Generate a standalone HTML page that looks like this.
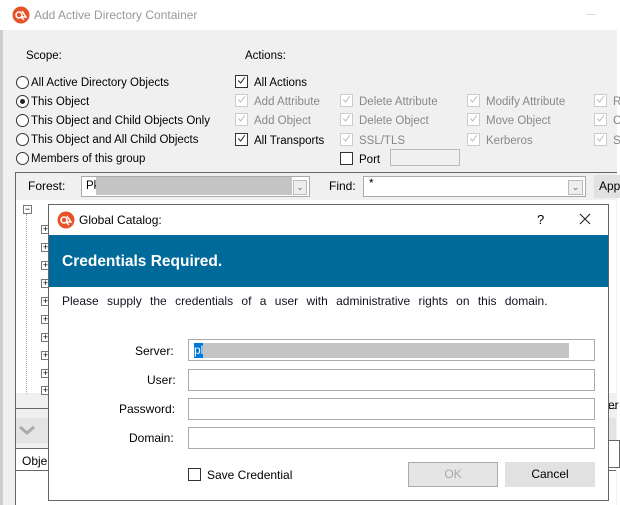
<!DOCTYPE html>
<html><head><meta charset="utf-8"><style>
*{box-sizing:border-box;margin:0;padding:0}
body{width:620px;height:505px;position:relative;overflow:hidden;background:#fff;font-family:"Liberation Sans",sans-serif;font-size:11.5px;color:#000}
.a{position:absolute;white-space:nowrap}
.cb{position:absolute;width:13px;height:13px;border:1px solid #333;background:#fff}
.cb.d{border-color:#ccc}
.ck{position:absolute;left:1px;top:0px;width:9px;height:9px}
.rd{position:absolute;width:13px;height:13px;border:1px solid #333;border-radius:50%;background:#fff}
.g{color:#888}
.t{margin-top:2px}
.in{position:absolute;background:#fff;border:1px solid #aaa;height:22px}
.pl{position:absolute;width:9px;height:9px;border:1px solid #777;background:#fff;font-size:9px;line-height:7px;text-align:center}
</style></head><body>
<div class="a" style="left:0;top:0;width:620px;height:30px;background:#fff"></div>
<svg class="a" style="left:12px;top:6px" width="18" height="18" viewBox="0 0 18 18"><circle cx="9" cy="9" r="8.5" fill="#e8522a"/><circle cx="7" cy="9" r="3" fill="none" stroke="#fff" stroke-width="1.5"/><path d="M9 11l3 3M10 5l4 6h-5" fill="none" stroke="#fff" stroke-width="1.4"/></svg>
<div class="a" style="left:34px;top:8px;color:#999;font-size:12px">Add Active Directory Container</div>
<div class="a" style="left:586px;top:14px;width:10px;height:1px;background:#ddd"></div>
<div class="a" style="left:0;top:30px;width:617px;height:475px;background:#f0f0f0;border-left:3px solid #ccc"></div>

<div class="a t" style="left:26px;top:48px">Scope:</div>
<div class="a t" style="left:245px;top:48px">Actions:</div>

<div class="rd" style="left:16px;top:76px"></div><div class="a t" style="left:31px;top:75px">All Active Directory Objects</div>
<div class="rd" style="left:16px;top:95px"><div style="position:absolute;left:3px;top:3px;width:5px;height:5px;border-radius:50%;background:#222"></div></div><div class="a t" style="left:31px;top:94px">This Object</div>
<div class="rd" style="left:16px;top:114px"></div><div class="a t" style="left:31px;top:113px">This Object and Child Objects Only</div>
<div class="rd" style="left:16px;top:133px"></div><div class="a t" style="left:31px;top:132px">This Object and All Child Objects</div>
<div class="rd" style="left:16px;top:152px"></div><div class="a t" style="left:31px;top:151px">Members of this group</div>

<svg width="0" height="0" style="position:absolute"><defs><path id="ck" d="M1.5 5l3 3 5-7" fill="none" stroke-width="1.2"/></defs></svg>
<div class="cb" style="left:235px;top:75px"><svg class="ck" viewBox="0 0 11 10"><use href="#ck" stroke="#222"/></svg></div><div class="a t" style="left:254px;top:75px">All Actions</div>
<div class="cb d" style="left:235px;top:94px"><svg class="ck" viewBox="0 0 11 10"><use href="#ck" stroke="#bbb"/></svg></div><div class="a g t" style="left:254px;top:94px">Add Attribute</div>
<div class="cb d" style="left:235px;top:113px"><svg class="ck" viewBox="0 0 11 10"><use href="#ck" stroke="#bbb"/></svg></div><div class="a g t" style="left:254px;top:113px">Add Object</div>
<div class="cb" style="left:235px;top:133px"><svg class="ck" viewBox="0 0 11 10"><use href="#ck" stroke="#222"/></svg></div><div class="a t" style="left:254px;top:133px">All Transports</div>

<div class="cb d" style="left:340px;top:94px"><svg class="ck" viewBox="0 0 11 10"><use href="#ck" stroke="#bbb"/></svg></div><div class="a g t" style="left:359px;top:94px">Delete Attribute</div>
<div class="cb d" style="left:340px;top:113px"><svg class="ck" viewBox="0 0 11 10"><use href="#ck" stroke="#bbb"/></svg></div><div class="a g t" style="left:359px;top:113px">Delete Object</div>
<div class="cb d" style="left:340px;top:133px"><svg class="ck" viewBox="0 0 11 10"><use href="#ck" stroke="#bbb"/></svg></div><div class="a g t" style="left:359px;top:133px">SSL/TLS</div>
<div class="cb" style="left:340px;top:152px"></div><div class="a t" style="left:359px;top:152px">Port</div>
<div class="a" style="left:390px;top:149px;width:70px;height:17px;border:1px solid #bbb;background:#f0f0f0"></div>

<div class="cb d" style="left:467px;top:94px"><svg class="ck" viewBox="0 0 11 10"><use href="#ck" stroke="#bbb"/></svg></div><div class="a g t" style="left:486px;top:94px">Modify Attribute</div>
<div class="cb d" style="left:467px;top:113px"><svg class="ck" viewBox="0 0 11 10"><use href="#ck" stroke="#bbb"/></svg></div><div class="a g t" style="left:486px;top:113px">Move Object</div>
<div class="cb d" style="left:467px;top:133px"><svg class="ck" viewBox="0 0 11 10"><use href="#ck" stroke="#bbb"/></svg></div><div class="a g t" style="left:486px;top:133px">Kerberos</div>
<div class="cb d" style="left:594px;top:94px"><svg class="ck" viewBox="0 0 11 10"><use href="#ck" stroke="#bbb"/></svg></div><div class="a g t" style="left:613px;top:94px">R</div>
<div class="cb d" style="left:594px;top:113px"><svg class="ck" viewBox="0 0 11 10"><use href="#ck" stroke="#bbb"/></svg></div><div class="a g t" style="left:613px;top:113px">C</div>
<div class="cb d" style="left:594px;top:133px"><svg class="ck" viewBox="0 0 11 10"><use href="#ck" stroke="#bbb"/></svg></div><div class="a g t" style="left:613px;top:133px">S</div>

<div class="a" style="left:15px;top:172px;width:602px;height:333px;border-left:1px solid #666;border-top:1px solid #666"></div>
<div class="a" style="left:28px;top:179px;font-size:12px">Forest:</div>
<div class="a" style="left:81px;top:176px;width:229px;height:21px;background:#fff;border:1px solid #aaa"></div>
<div class="a" style="left:86px;top:180px">Pk</div>
<div class="a" style="left:96px;top:177px;width:196px;height:18px;background:#c4c4c4"></div>
<div class="a" style="left:293px;top:180px;width:14px;height:15px;border:1px solid #bbb;background:#eee;font-size:9px;color:#666;text-align:center;line-height:13px">&#8964;</div>
<div class="a" style="left:329px;top:179px;font-size:12px">Find:</div>
<div class="a" style="left:363px;top:176px;width:223px;height:21px;background:#fff;border:1px solid #aaa"></div>
<div class="a" style="left:369px;top:178px">*</div>
<div class="a" style="left:568px;top:180px;width:15px;height:15px;border:1px solid #bbb;background:#eee;font-size:9px;color:#666;text-align:center;line-height:13px">&#8964;</div>
<div class="a" style="left:594px;top:175px;width:26px;height:23px;background:#e1e1e1"></div>
<div class="a" style="left:599px;top:179px;font-size:12px">App</div>

<div class="a" style="left:16px;top:200px;width:600px;height:193px;background:#fff"></div>
<div class="a" style="left:16px;top:393px;width:600px;height:16px;background:#f0f0f0;border-bottom:1px solid #666"></div>
<div class="pl" style="left:23px;top:205px;line-height:6px">&#8722;</div>
<div class="a" style="left:26px;top:214px;height:180px;border-left:1px dotted #aaa"></div>
<div class="pl" style="left:41px;top:225px">+</div><div class="pl" style="left:41px;top:243px">+</div><div class="pl" style="left:41px;top:261px">+</div><div class="pl" style="left:41px;top:279px">+</div><div class="pl" style="left:41px;top:297px">+</div><div class="pl" style="left:41px;top:315px">+</div><div class="pl" style="left:41px;top:333px">+</div><div class="pl" style="left:41px;top:351px">+</div><div class="pl" style="left:41px;top:369px">+</div><div class="pl" style="left:41px;top:386px">+</div>
<div class="a" style="left:16px;top:418px;width:600px;height:25px;background:#e4e4e4"></div>
<svg class="a" style="left:18px;top:424px" width="18" height="12"><path d="M2 3l7 6 7-6" fill="none" stroke="#aaa" stroke-width="3"/></svg>
<div class="a" style="left:16px;top:448px;width:600px;height:57px;background:#fff;border-top:1px solid #666"></div>
<div class="a" style="left:16px;top:448px;width:600px;height:23px;border-bottom:1px solid #666"></div>
<div class="a" style="left:22px;top:454px;font-size:12px">Obje</div>
<div class="a" style="left:608px;top:398px;font-size:12px">er</div>
<div class="a" style="left:608px;top:440px;width:12px;height:28px;border:1px solid #666;background:#fff"></div>

<div class="a" style="left:48px;top:204px;width:561px;height:297px;background:#fff;border:1px solid #666"></div>
<svg class="a" style="left:57px;top:211px" width="18" height="18" viewBox="0 0 18 18"><circle cx="9" cy="9" r="8.5" fill="#e8522a"/><circle cx="7" cy="9" r="3" fill="none" stroke="#fff" stroke-width="1.5"/><path d="M9 11l3 3M10 5l4 6h-5" fill="none" stroke="#fff" stroke-width="1.4"/></svg>
<div class="a" style="left:79px;top:213px;font-size:12px">Global Catalog:</div>
<div class="a" style="left:537px;top:212px;font-size:13px">?</div>
<svg class="a" style="left:579px;top:213px" width="12" height="12"><path d="M1 1l10 10M11 1L1 11" stroke="#222" stroke-width="1.1"/></svg>
<div class="a" style="left:49px;top:235px;width:559px;height:52px;background:#006a9b"></div>
<div class="a" style="left:62px;top:253px;color:#fff;font-weight:bold;font-size:15.5px">Credentials Required.</div>
<div class="a" style="left:62px;top:294px;color:#112;font-size:12px;word-spacing:5px">Please supply the credentials of a user with administrative rights on this domain.</div>

<div class="a" style="left:135px;top:344px;font-size:12px">Server:</div>
<div class="a" style="left:147px;top:373px;font-size:12px">User:</div>
<div class="a" style="left:119px;top:402px;font-size:12px">Password:</div>
<div class="a" style="left:129px;top:431px;font-size:12px">Domain:</div>
<div class="in" style="left:188px;top:339px;width:407px"></div>
<div class="a" style="left:194px;top:343px;width:9px;height:15px;background:#0078d7;color:#fff;font-size:12px;line-height:15px">pl</div>
<div class="a" style="left:203px;top:343px;width:366px;height:15px;background:#c4c4c4"></div>
<div class="in" style="left:188px;top:369px;width:407px"></div>
<div class="in" style="left:188px;top:398px;width:407px"></div>
<div class="in" style="left:188px;top:427px;width:407px"></div>
<div class="cb" style="left:188px;top:468px"></div>
<div class="a" style="left:207px;top:468px;font-size:12px">Save Credential</div>
<div class="a" style="left:408px;top:462px;width:90px;height:25px;border:1px solid #aaa;background:#e5e5e5;color:#aaa;text-align:center;line-height:23px;font-size:12px">OK</div>
<div class="a" style="left:505px;top:462px;width:90px;height:25px;background:#e1e1e1;text-align:center;line-height:25px;font-size:12px">Cancel</div>
</body></html>
